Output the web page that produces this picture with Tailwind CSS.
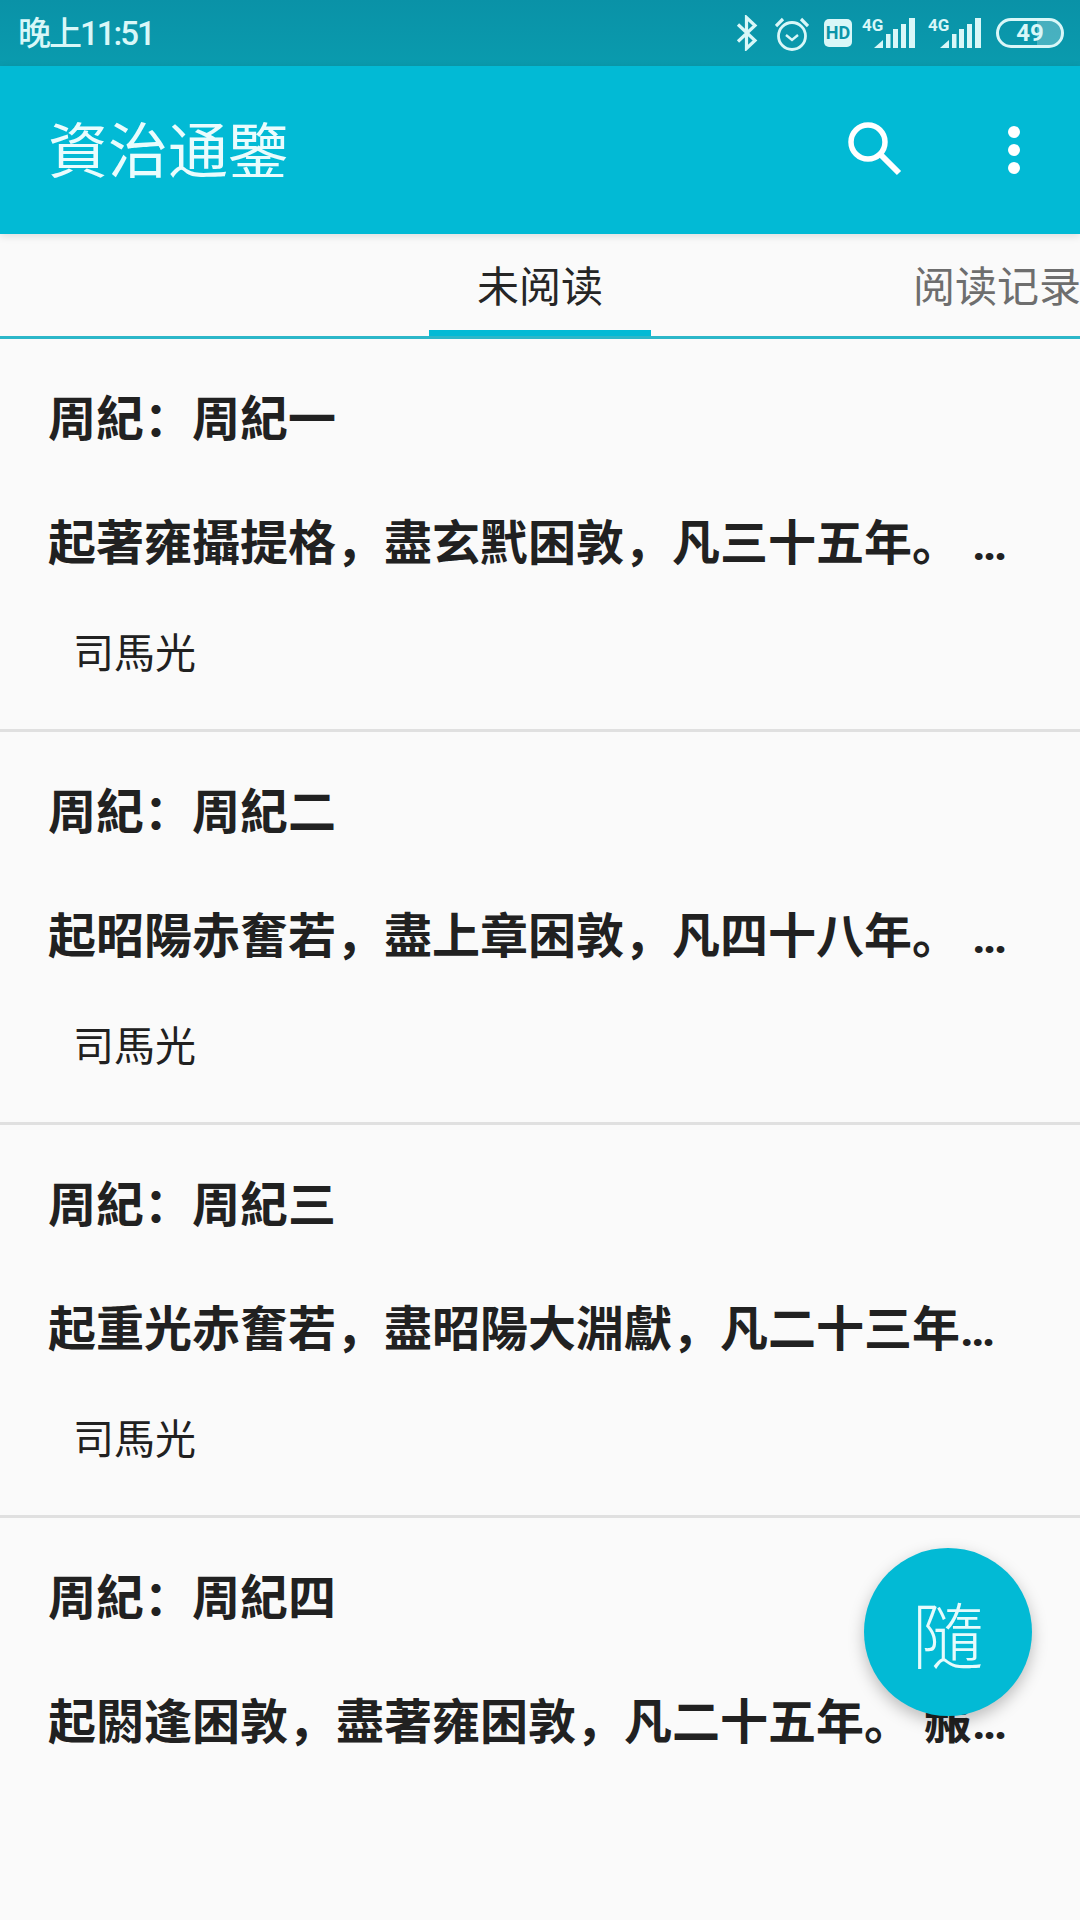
<!DOCTYPE html>
<html lang="zh">
<head>
<meta charset="UTF-8">
<meta name="viewport" content="width=device-width, initial-scale=1.0">
<title>資治通鑒</title>
<script src="https://cdn.jsdelivr.net/npm/@tailwindcss/browser@4"></script>
</head>
<body class="bg-[#fafafa] font-['Roboto','Noto_Sans_CJK_SC',sans-serif]">
<div class="relative w-[1080px] h-[1920px] overflow-hidden bg-[#fafafa]">

  <!-- Status bar -->
  <div class="h-[66px] flex items-center justify-between pl-[18px] pr-[16px] bg-gradient-to-b from-[#0a92a7] to-[#0a9bae] text-[#d9f7f8]">
    <span class="text-[33px] font-medium tracking-[-2px] leading-none">晚上11:51</span>
    <div class="flex items-center">
      <svg class="w-[22px] h-[36px] mr-[17px]" viewBox="0 0 22 36" fill="none" stroke="#d9f7f8" stroke-width="3.2"><path d="M2 9.5 19 25.5 10.5 33.5V2.5L19 10.5 2 26.5"/></svg>
      <svg class="w-[34px] h-[36px] mr-[15px]" viewBox="0 0 34 36" fill="none" stroke="#d9f7f8" stroke-width="2.8"><circle cx="17" cy="21" r="13.500"/><path d="M11 20l6 5 6-5" stroke-width="2.4"/><path d="M1 11 8 4M33 11 26 4" stroke-width="3.200"/></svg>
      <div class="w-[28px] h-[28px] mr-[10px] rounded-[5px] bg-[#d9f7f8] flex items-center justify-center text-[#0a94a8] text-[18px] font-bold leading-none">HD</div>
      <div class="relative w-[53px] h-[32px] mr-[13px]">
        <span class="absolute left-0 top-0 text-[17px] font-bold leading-none">4G</span>
        <svg class="absolute right-0 top-[1px] w-[41px] h-[30px]" viewBox="0 0 41 30" fill="#d9f7f8"><path d="M0 30 9 22v8zM12 30V16h4.500v14zM19 30V11h5v19zM27 30V6h5v24zM35 30V0h6v30z"/></svg>
      </div>
      <div class="relative w-[53px] h-[32px] mr-[15px]">
        <span class="absolute left-0 top-0 text-[17px] font-bold leading-none">4G</span>
        <svg class="absolute right-0 top-[1px] w-[41px] h-[30px]" viewBox="0 0 41 30" fill="#d9f7f8"><path d="M0 30 9 22v8zM12 30V16h4.500v14zM19 30V11h5v19zM27 30V6h5v24zM35 30V0h6v30z"/></svg>
      </div>
      <div class="relative w-[68px] h-[30px] rounded-full border-[3px] border-[#d9f7f8] flex items-center justify-center overflow-hidden">
        <div class="absolute right-0 top-0 bottom-0 w-[24px] bg-white/25"></div>
        <span class="relative text-[24px] font-bold leading-none">49</span>
      </div>
    </div>
  </div>

  <!-- App bar -->
  <header class="relative z-10 h-[168px] flex items-center pr-[60px] bg-[#02bad5] shadow-[0_2px_8px_rgba(0,0,0,0.12)]">
    <h1 class="pl-[48px] pt-[6px] text-[60px] leading-none text-[#eafcfd] font-normal">資治通鑒</h1>
    <svg class="ml-auto mr-[103px] w-[58px] h-[58px]" viewBox="0 0 58 58" fill="none" stroke="#fff"><circle cx="21" cy="21" r="17" stroke-width="5.500"/><path d="M33 33 52 52" stroke-width="6"/></svg>
    <div class="flex flex-col gap-[6px]">
      <span class="w-[12px] h-[12px] rounded-full bg-white"></span>
      <span class="w-[12px] h-[12px] rounded-full bg-white"></span>
      <span class="w-[12px] h-[12px] rounded-full bg-white"></span>
    </div>
  </header>

  <!-- Tabs -->
  <div class="relative h-[105px] flex pl-[429px] border-b-[3px] border-[#2cb7c9] overflow-hidden">
    <div class="relative w-[222px] shrink-0 text-center text-[42px] leading-[108px] text-[#262626]">未阅读
      <div class="absolute left-0 right-0 bottom-0 h-[6px] bg-[#02bad5]"></div>
    </div>
    <div class="ml-[262px] shrink-0 whitespace-nowrap text-[42px] leading-[108px] text-[#6e6e6e]">阅读记录</div>
  </div>

  <!-- List -->
  <div class="text-[#212121]">
    <div class="h-[393px] pt-[49px] pl-[48px] border-b-[3px] border-[#e0e0e0]">
      <div class="text-[48px] leading-[64px] font-bold">周紀&#xFF1A;周紀一</div>
      <div class="mt-[60px] text-[48px] leading-[64px] font-bold whitespace-nowrap">起著雍攝提格&#xFF0C;盡玄黓困敦&#xFF0C;凡三十五年。 <span class="tracking-[-3px]">...</span></div>
      <div class="mt-[50px] pl-[25px] text-[41px] leading-[56px]">司馬光</div>
    </div>
    <div class="h-[393px] pt-[49px] pl-[48px] border-b-[3px] border-[#e0e0e0]">
      <div class="text-[48px] leading-[64px] font-bold">周紀&#xFF1A;周紀二</div>
      <div class="mt-[60px] text-[48px] leading-[64px] font-bold whitespace-nowrap">起昭陽赤奮若&#xFF0C;盡上章困敦&#xFF0C;凡四十八年。 <span class="tracking-[-3px]">...</span></div>
      <div class="mt-[50px] pl-[25px] text-[41px] leading-[56px]">司馬光</div>
    </div>
    <div class="h-[393px] pt-[49px] pl-[48px] border-b-[3px] border-[#e0e0e0]">
      <div class="text-[48px] leading-[64px] font-bold">周紀&#xFF1A;周紀三</div>
      <div class="mt-[60px] text-[48px] leading-[64px] font-bold whitespace-nowrap">起重光赤奮若&#xFF0C;盡昭陽大淵獻&#xFF0C;凡二十三年<span class="tracking-[-3px]">...</span></div>
      <div class="mt-[50px] pl-[25px] text-[41px] leading-[56px]">司馬光</div>
    </div>
    <div class="pt-[49px] pl-[48px]">
      <div class="text-[48px] leading-[64px] font-bold">周紀&#xFF1A;周紀四</div>
      <div class="mt-[60px] text-[48px] leading-[64px] font-bold whitespace-nowrap">起閼逢困敦&#xFF0C;盡著雍困敦&#xFF0C;凡二十五年。 赧<span class="tracking-[-3px]">...</span></div>
    </div>
  </div>

  <!-- Floating button -->
  <div class="absolute left-[864px] top-[1548px] w-[168px] h-[168px] rounded-full bg-[#02bad5] shadow-[0_6px_16px_rgba(0,0,0,0.25)] flex items-center justify-center text-[72px] leading-none font-light text-[#e6fbfc] font-['Noto_Sans_CJK_TC',sans-serif]">隨</div>
</div>
</body>
</html>
